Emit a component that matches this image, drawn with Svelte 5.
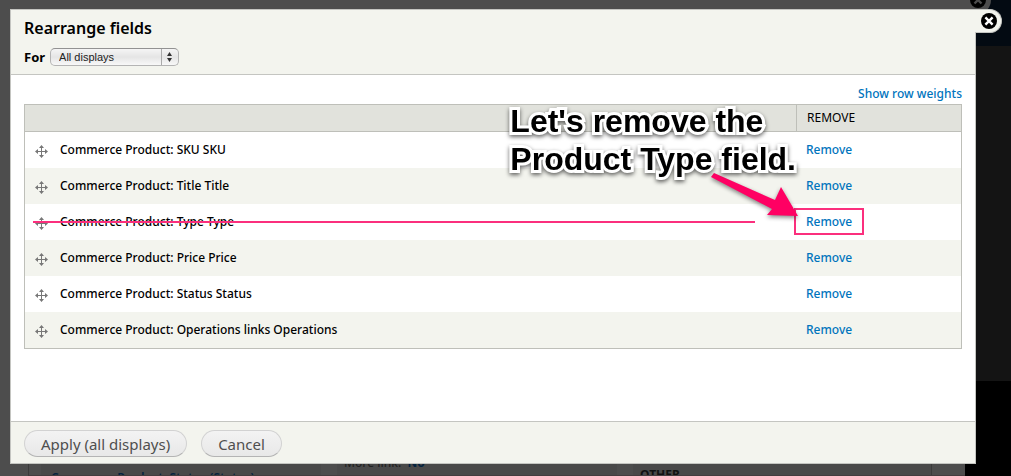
<script>
  const fields = [
    'Commerce Product: SKU SKU',
    'Commerce Product: Title Title',
    'Commerce Product: Type Type',
    'Commerce Product: Price Price',
    'Commerce Product: Status Status',
    'Commerce Product: Operations links Operations'
  ];
  const marked = 2;
</script>

<div class="page">
  <div class="backdrop" aria-hidden="true">
    <div class="side"></div>
    <div class="tab">
      <svg width="16" height="16" viewBox="0 0 16 16"><circle cx="8" cy="8" r="8" fill="#000" /><path d="M4.5 4.5l7 7m0-7l-7 7" stroke="#4d4d4d" stroke-width="2.4" /></svg>
    </div>
    <div class="strip">
      <div class="cell first"><span class="navy">Commerce Product: Status (Status)</span></div>
      <div class="cell second"><span class="more">More link: &nbsp;<b>No</b></span></div>
      <div class="cell third"><span class="other">OTHER</span></div>
    </div>
  </div>

  <div class="dialog" role="dialog" aria-labelledby="title">
    <button class="close" aria-label="Close">
      <svg width="16" height="16" viewBox="0 0 16 16"><circle cx="8" cy="8" r="8" fill="#000" /><path d="M4.4 4.4l7.2 7.2m0-7.2l-7.2 7.2" stroke="#fff" stroke-width="2.4" /></svg>
    </button>
    <header>
      <h1 id="title">Rearrange fields</h1>
      <div class="for">
        <label for="display">For</label>
        <span class="picker">
          <select id="display"><option>All displays</option></select>
          <svg width="17" height="16" viewBox="0 0 17 16"><path d="M.5 0v16" stroke="#aaa" /><path d="M8.500 3l2.500 4h-5zM8.500 13l2.500-4h-5z" fill="#333" /></svg>
        </span>
      </div>
    </header>

    <main>
      <div class="weights"><a href="#weights">Show row weights</a></div>
      <div class="sheet">
        <table>
          <thead><tr><th aria-label="Field"></th><th class="rm">REMOVE</th></tr></thead>
          <tbody>
            {#each fields as field, i}
              <tr>
                <td>
                  <div class="field">
                    <svg width="13" height="13" viewBox="0 0 13 13" fill="#777"><path d="M6 2h1v4h4v1h-4v4h-1v-4h-4v-1h4z" /><path d="M6.500 0l2.500 3h-5zM6.500 13l2.500-3h-5zM0 6.500l3-2.500v5zM13 6.500l-3-2.500v5z" /></svg>
                    <span>{field}</span>
                  </div>
                  {#if i === marked}<i class="strike"></i>{/if}
                </td>
                <td class="rm">
                  <a href="#remove">Remove</a>
                  {#if i === marked}<i class="frame"></i>{/if}
                </td>
              </tr>
            {/each}
          </tbody>
        </table>
        <div class="note">
          <svg width="96" height="60" viewBox="0 0 96 60"><path d="M5 3L66 30L72 17L89 46L58 45L63 39L2 7Z" fill="#ff0063" /></svg>
          <p>Let's remove the<br />Product Type field.</p>
        </div>
      </div>
    </main>

    <footer>
      <button class="pill">Apply (all displays)</button>
      <button class="pill">Cancel</button>
    </footer>
  </div>
</div>

<style>
  :global(body) { margin: 0; background: #4d4d4d; }
  .page {
    position: relative;
    box-sizing: border-box;
    min-height: 100vh;
    padding: 9px 35px 12px 10px;
    display: flex;
    overflow: hidden;
    font: 12px/16px "Noto Sans", sans-serif;
    color: #000;
  }
  .backdrop { position: absolute; inset: 0; background: #4d4d4d; }
  .side {
    position: absolute;
    inset: 0 0 0 auto;
    width: 46px;
    background: linear-gradient(#030a12 46px, #141414 46px, #141414 381px, #000 381px);
  }
  .tab {
    position: absolute;
    top: -14px;
    right: 20px;
    width: 40px;
    height: 28px;
    border-radius: 0 0 14px 0;
    background: #4d4d4d;
  }
  .tab svg { position: absolute; left: 19px; top: 6px; }
  .strip {
    position: absolute;
    left: 28px;
    right: 46px;
    bottom: 0;
    height: 13px;
    display: flex;
    border-left: 1px solid #3b3b3b;
    border-bottom: 1px solid #443d3f;
    overflow: hidden;
    font-size: 12px;
    line-height: 16px;
  }
  .cell { position: relative; margin-left: 12px; width: 280px; background: #494949; }
  .cell.second { margin-left: 16px; }
  .cell.third { margin-left: 16px; width: 298px; border-right: 1px solid #3b3b3b; }
  .cell span { position: absolute; left: 7px; top: -7px; white-space: nowrap; color: #222; }
  .cell .navy { left: 10px; top: 8px; color: #04233f; font-weight: 600; }
  .cell .more { font-weight: 500; }
  .cell .more b { color: #04233f; }
  .cell .other { top: 5px; font-weight: 700; color: #111; }

  .dialog {
    position: relative;
    flex: 1;
    display: flex;
    flex-direction: column;
    box-sizing: border-box;
    border: 1px solid #c4c5c1;
    background: #fff;
  }
  .close {
    position: absolute;
    top: -1px;
    right: -27px;
    width: 27px;
    height: 24px;
    padding: 3px 0 0 6px;
    border: 1px solid #c4c5c1;
    border-left: 0;
    border-radius: 0 12px 12px 0;
    background: #f3f4ee;
    display: flex;
  }
  header { padding: 7px 13px 7px; background: #f3f4ee; border-bottom: 1px solid #c4c5c1; }
  h1 { margin: 0; font-size: 16px; line-height: 22px; font-weight: 600; }
  .for { display: flex; align-items: center; gap: 5px; margin-top: 8px; height: 20px; font-size: 13px; font-weight: 700; }
  .picker { position: relative; display: flex; }
  .picker svg { position: absolute; right: 1px; top: 1px; pointer-events: none; }
  select {
    appearance: none;
    width: 129px;
    height: 18px;
    padding: 0 20px 0 8px;
    border: 1px solid #b4b4b4;
    border-top-color: #929292;
    border-radius: 5px;
    background: linear-gradient(#f5f5f5, #e5e5e5 50%, #f8f8f8);
    font: 11px "Liberation Sans", sans-serif;
    color: #222;
  }
  main { flex: 1; padding: 10px 13px 24px; }
  a { color: #0074bd; text-decoration: none; font-weight: 500; }
  .weights { text-align: right; height: 19px; line-height: 18px; }
  .sheet { position: relative; }
  table { width: 100%; border: 1px solid #bebfb9; border-collapse: separate; border-spacing: 0; }
  th {
    box-sizing: border-box;
    height: 27px;
    padding: 0 10px;
    background: #e1e2dc;
    border-bottom: 1px solid #bebfb9;
    text-align: left;
    font-weight: 400;
  }
  th.rm { border-left: 1px solid #bebfb9; }
  .rm { width: 165px; box-sizing: border-box; }
  td { position: relative; height: 36px; padding: 0 10px; box-sizing: border-box; }
  tbody tr:nth-child(even) { background: #f3f4ee; }
  .field { display: flex; align-items: center; gap: 12px; font-weight: 500; }
  .field svg { margin-top: 3px; }
  .strike { position: absolute; left: 8px; right: 41px; top: 17px; height: 2px; background: #fb2f7d; }
  .frame { position: absolute; left: -2px; top: 4px; width: 66px; height: 23px; border: 2px solid #fb2f7d; }
  .note { position: absolute; right: 166px; top: -2px; }
  .note p {
    position: relative;
    margin: 0;
    white-space: nowrap;
    font: 700 32px/38px "Liberation Sans", sans-serif;
    -webkit-text-stroke: 6px #fff;
    paint-order: stroke fill;
    filter: drop-shadow(0 2px 2px #0009);
  }
  .note svg { position: absolute; right: -9px; top: 68px; filter: drop-shadow(0 2px 2px #0007); }
  footer { display: flex; gap: 14px; padding: 8px 13px 6px; background: #f3f4ee; border-top: 1px solid #c4c5c1; }
  .pill {
    height: 27px;
    padding: 0 16px;
    border: 1px solid #d2d2d2;
    border-bottom-color: #b4b4b4;
    border-radius: 14px;
    background: linear-gradient(#f3f3f3, #e8e8e8);
    font: 400 15px/20px "Noto Sans", sans-serif;
    color: #4f4f4f;
  }
</style>
